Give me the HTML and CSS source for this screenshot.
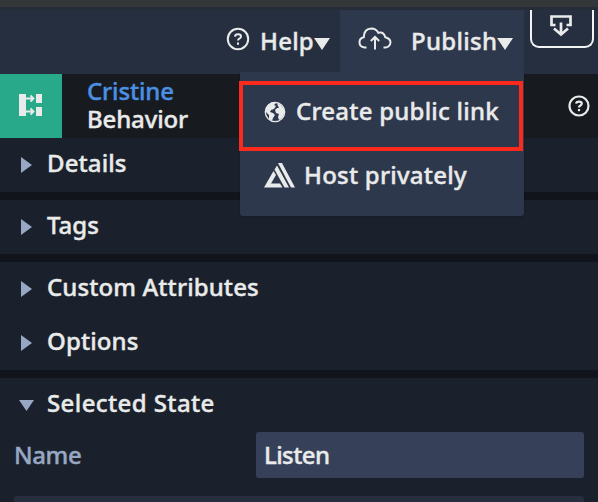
FILE: index.html
```html
<!DOCTYPE html>
<html lang="en">
<head>
<meta charset="utf-8">
<title>Behavior</title>
<link rel="stylesheet" href="styles.css">
</head>
<body>
<div class="app">
  <div class="strip"></div>
  <header class="topbar">
    <div class="help">
      <svg class="help-icon" width="24" height="24" viewBox="0 0 24 24"><circle cx="12" cy="12" r="10.2"/><path d="M9 9.6Q9.100 7.200 12 7.200Q15 7.200 15 9.500Q15 10.900 13.300 11.700Q12 12.300 12 13.600"/><path d="M12 15.500v2.200"/></svg>
      <span class="t-help">Help</span>
      <svg class="caret" width="16" height="12" viewBox="0 0 16 12"><path d="M0 0H16L8 12Z"/></svg>
    </div>
    <div class="publish">
      <svg class="cloud" width="34" height="24" viewBox="0 0 34 24"><path d="M8.500 20.500H6.500Q1.500 19.800 1.500 15.200Q1.500 11.200 5.800 10.200Q6 1.700 13.500 1.500Q18 1.500 20.300 5.800Q25.500 4.300 27.300 10.200Q32.500 11.600 32.500 15.500Q32 19.800 27.500 20.500H25.500M17 22.500V10.500M12.800 14L17 10L21.200 14"/></svg>
      <span class="t-publish">Publish</span>
      <svg class="caret" width="16" height="12" viewBox="0 0 16 12"><path d="M0 0H16L8 12Z"/></svg>
    </div>
    <div class="download">
      <svg width="22" height="22" viewBox="0 0 22 22"><path d="M5.500 10H1.500V1.500H20.500V10H16.500M11 7.500V19M4 13.500L11 19.500L18 13.500"/></svg>
    </div>
  </header>
  <section class="heading">
    <div class="badge">
      <svg width="24" height="24" viewBox="0 0 24 24"><path class="solid" d="M0 1H7V23H0ZM17 1H23V10H17ZM17 14H23V23H17Z"/><path class="arrow" d="M6 5.500H14M11.500 2.500L14.500 5.500L11.500 8.500M6 18.500H14M11.500 15.500L14.500 18.500L11.500 21.500"/></svg>
    </div>
    <div class="titles">
      <span class="name t-cristine">Cristine</span>
      <span class="t-behavior">Behavior</span>
    </div>
    <svg class="help-icon" width="24" height="24" viewBox="0 0 24 24"><circle cx="12" cy="12" r="9.500"/><path d="M9.200 9.600Q9.300 7.600 12 7.600Q14.800 7.600 14.800 9.600Q14.800 10.900 13.200 11.700Q12 12.300 12 13.400"/><path d="M12 15v2.200"/></svg>
  </section>
  <section class="group"><div class="row"><i class="closed"></i><span class="t-details">Details</span></div></section>
  <section class="group"><div class="row"><i class="closed"></i><span class="t-tags">Tags</span></div></section>
  <section class="group">
    <div class="row"><i class="closed"></i><span class="t-custom">Custom Attributes</span></div>
    <div class="row"><i class="closed"></i><span class="t-options">Options</span></div>
  </section>
  <section class="group last">
    <div class="row"><i class="open"></i><span class="t-selected">Selected State</span></div>
    <div class="field"><span class="label t-name">Name</span><div class="input"><span class="t-listen">Listen</span></div></div>
    <div class="card"></div>
  </section>
  <div class="menu">
    <div class="item active">
      <svg width="22" height="22" viewBox="0 0 22 22"><circle class="ring" cx="11" cy="11" r="9.700"/><path class="solid" d="M4 4L8 1L12 2L10 4L12 5L10 8L7 9L6 11L9 12L11 14L9 17L8 20L5 18L5 14L2 11L2 7ZM13 2L17 4L20 8L20 13L18 17L15 19L14 16L15 13L12 12L11 9L13 7L15 7L14 5Z"/></svg>
      <span class="t-create">Create public link</span>
    </div>
    <div class="item">
      <svg width="31" height="25" viewBox="0 0 31 25"><path class="solid" d="M9.500 8L12 12L7 20.500H16L18.500 24.500H0ZM10.500 6.500L13 2.500L25 24.500H20.500ZM14 0H18L31 24.500H27Z"/></svg>
      <span class="t-host">Host privately</span>
    </div>
  </div>
</div>
</body>
</html>
```
FILE: styles.css
```css
* { box-sizing: border-box; }
body {
  margin: 0;
  background: #1b212c;
  color: #e9ebea;
  font: 500 24px/28px "Noto Sans", sans-serif;
}
.app { position: relative; width: 598px; height: 502px; overflow: hidden; }
span { white-space: nowrap; -webkit-text-stroke: 0.4px currentColor; }
svg { display: block; flex: none; }
.strip { height: 10px; background: #333738; border-bottom: 3px solid #242d38; }
.topbar { display: flex; height: 64px; background: #262f40; }
.help { display: flex; width: 340px; padding: 17px 0 0 226px; }
.help span { margin: 0 0 0 10px; width: 54px; }
.publish { display: flex; width: 184px; padding: 17px 0 0 18px; background: #2e384d; }
.publish span { margin-left: 19px; width: 86px; }
.caret { margin-top: 11px; fill: #e9ebea; }
.help-icon, .cloud { fill: none; stroke: #e9ebea; stroke-width: 2; }
.download {
  width: 64px; height: 38px; margin-left: 6px; padding: 5px 0 0 18px;
  border: 2px solid #f2f3f3; border-top: 0; border-radius: 0 0 9px 9px;
}
.download svg { fill: none; stroke: #e9ebea; stroke-width: 2.7; }
.heading { display: flex; height: 64px; background: #171a1e; }
.heading .help-icon { margin: 20px 7px 0 auto; stroke-width: 2.2; }
.badge { width: 62px; padding: 19px 0 0 19px; background: #28aa8a; }
.solid { fill: #e9ebea; }
.arrow { fill: none; stroke: #e9ebea; stroke-width: 1.8; }
.titles { display: flex; flex-direction: column; padding: 3px 0 0 25px; }
.name { color: #4b8fe2; }
.group { background: #1b212c; border-bottom: 8px solid #11141b; }
.last { border: 0; height: 124px; }
.row { display: flex; height: 54px; padding: 11px 0 0 21px; }
.row span { margin-left: 10px; }
.row i { width: 16px; height: 16px; margin-top: 8px; background: #98a7c3; }
.closed { clip-path: polygon(0 0, 11px 8px, 0 16px); }
.row .open { width: 18px; margin-left: -2px; clip-path: polygon(0 3px, 15px 3px, 7.500px 14px); }
.field { display: flex; height: 46px; padding-left: 14px; }
.label { width: 242px; padding-top: 9px; color: #98a7c3; }
.input { width: 328px; padding: 9px 0 0 8px; background: #364159; border-radius: 3px; }
.card { height: 20px; margin: 18px 14px 0; background: #272e3e; border-radius: 3px; }
.menu {
  position: absolute; left: 240px; top: 72px; width: 284px; height: 144px;
  padding-top: 9px; background: #2e384d; border-radius: 0 0 3px 3px;
  box-shadow: 0 1px 2px rgba(0,0,0,.2);
}
.item { display: flex; padding: 10px 0 0 24px; }
.item svg { margin-top: 2px; }
.item span { margin-left: 9px; }
.active {
  width: 284px; height: 70px; margin-left: -1px; padding: 12px 0 0 21px;
  border: 4px solid #fc291d;
}
.active svg { margin-top: 4px; }
.active span { margin-left: 10px; }
.ring { fill: none; stroke: #e9ebea; stroke-width: 1.300; }
.t-publish { letter-spacing: .3px; }
.t-help { letter-spacing: .2px; }
.t-cristine, .t-behavior { letter-spacing: -.15px; }
.t-details { letter-spacing: .1px; }
.t-custom { letter-spacing: .1px; }
.t-options { letter-spacing: .1px; }
.t-selected { letter-spacing: .4px; }
.t-create, .t-host { letter-spacing: .22px; }
.t-name { letter-spacing: -.4px; }
.t-listen { letter-spacing: -.6px; }
```
